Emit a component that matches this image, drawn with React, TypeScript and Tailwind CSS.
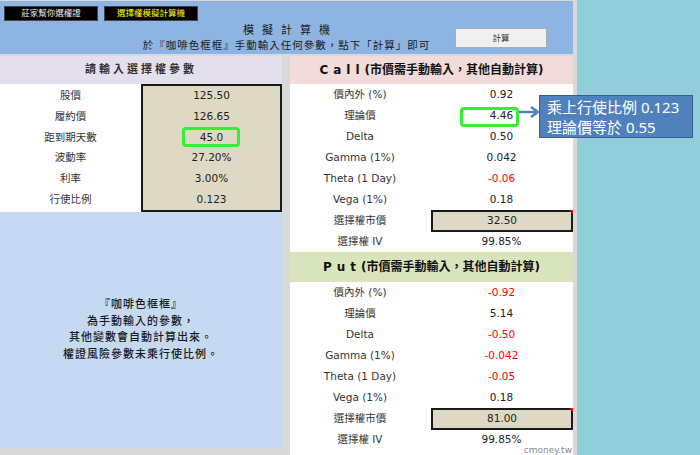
const FONT = '"DejaVu Sans", "Noto Sans CJK TC", sans-serif';

type Row = { label: string; value: string; red?: boolean; box?: boolean; mark?: boolean };

const inputs = [
  { label: "股價", value: "125.50" },
  { label: "履約價", value: "126.65" },
  { label: "距到期天數", value: "45.0", mark: true },
  { label: "波動率", value: "27.20%" },
  { label: "利率", value: "3.00%" },
  { label: "行使比例", value: "0.123" },
];

const callRows: Row[] = [
  { label: "價內外 (%)", value: "0.92" },
  { label: "理論價", value: "4.46", mark: true },
  { label: "Delta", value: "0.50" },
  { label: "Gamma (1%)", value: "0.042" },
  { label: "Theta (1 Day)", value: "-0.06", red: true },
  { label: "Vega (1%)", value: "0.18" },
  { label: "選擇權市價", value: "32.50", box: true },
  { label: "選擇權 IV", value: "99.85%" },
];

const putRows: Row[] = [
  { label: "價內外 (%)", value: "-0.92", red: true },
  { label: "理論價", value: "5.14" },
  { label: "Delta", value: "-0.50", red: true },
  { label: "Gamma (1%)", value: "-0.042", red: true },
  { label: "Theta (1 Day)", value: "-0.05", red: true },
  { label: "Vega (1%)", value: "0.18" },
  { label: "選擇權市價", value: "81.00", box: true },
  { label: "選擇權 IV", value: "99.85%" },
];

function OutRow({ r }: { r: Row }) {
  return (
    <div className="flex h-[21px] items-center text-[10.5px]">
      <div className="w-[140px] text-center text-[#333]">{r.label}</div>
      <div className="relative flex-1 h-full flex items-center justify-center">
        {r.box ? (
          <div className="relative ml-px w-full h-[22px] border-2 border-[#1a1a1a] bg-[#ddd9c4] flex items-center justify-center text-[#222]">
            {r.value}
            {/* comment marker */}
            <span className="absolute -top-[2px] -right-[2px] w-0 h-0 border-l-[4px] border-l-transparent border-t-[4px] border-t-[#ff0000]" />
          </div>
        ) : (
          <span className={r.red ? "text-[#ff0000]" : "text-[#222]"}>{r.value}</span>
        )}
        {r.mark && (
          <div className="absolute left-[30px] top-[2px] w-[59px] h-[20px] rounded-[4px] border-[3px] border-[#33f033]" />
        )}
      </div>
    </div>
  );
}

export default function App() {
  return (
    <div
      className="relative w-[700px] h-[455px] flex bg-[#92cddc] overflow-hidden"
      style={{ fontFamily: FONT }}
    >
      <div className="w-[577px] h-full bg-[#d9d9d9] pt-px pr-[4px] flex flex-col">
        {/* header */}
        <div className="h-[53px] bg-[#8db4e2] pt-[5px]">
          <div className="flex gap-[6px] pl-[4px]">
            <div className="w-[94px] h-[15px] bg-black border border-[#444] flex items-center justify-center text-[8.5px] text-[#e8e8e8]">
              莊家幫你選權證
            </div>
            <div className="w-[94px] h-[15px] bg-black border border-[#444] flex items-center justify-center text-[8.5px] text-[#ffff00]">
              選擇權模擬計算機
            </div>
          </div>
          <div className="mt-[3px] grid grid-cols-[1fr_auto_1fr] items-center">
            <div />
            <div className="flex flex-col items-center text-[#1a1a1a]">
              <div className="text-[11px] leading-[14px] tracking-[8px] ml-[8px]">模擬計算機</div>
              <div className="text-[10.5px] leading-[14px] tracking-[1px]">
                於『咖啡色框框』手動輸入任何參數，點下「計算」即可
              </div>
            </div>
            <div className="flex justify-end pr-[26px]">
              <div className="w-[92px] h-[20px] bg-[#f0f0f0] border border-[#adadad] flex items-center justify-center text-[8.5px] text-[#333]">
                計算
              </div>
            </div>
          </div>
        </div>

        <div className="mt-[2px] flex gap-[8px] flex-1">
          {/* left column */}
          <div className="w-[282px] flex flex-col">
            <div className="h-[28px] bg-[#e4dfec] flex items-center justify-center text-[11px] font-semibold tracking-[3px] text-[#333]">
              請輸入選擇權參數
            </div>
            <div className="h-[128px] flex bg-white text-[10.5px]">
              <div className="w-[141px] flex flex-col py-[2px]">
                {inputs.map((r) => (
                  <div key={r.label} className="flex-1 flex items-center justify-center text-[#333]">
                    {r.label}
                  </div>
                ))}
              </div>
              <div className="w-[141px] border-2 border-[#1a1a1a] bg-[#ddd9c4] flex flex-col">
                {inputs.map((r) => (
                  <div key={r.label} className="relative flex-1 flex items-center justify-center text-[#222]">
                    {r.value}
                    {r.mark && (
                      <div className="absolute left-[39px] top-0 w-[58px] h-[20px] rounded-[4px] border-[3px] border-[#33f033]" />
                    )}
                  </div>
                ))}
              </div>
            </div>
            <div className="h-[236px] bg-[#c5d9f1] flex flex-col items-center justify-center text-[11px] font-medium leading-[16.5px] tracking-[1px] text-[#1a1a1a]">
              <div>『咖啡色框框』</div>
              <div>為手動輸入的參數，</div>
              <div>其他變數會自動計算出來。</div>
              <div>權證風險參數未乘行使比例。</div>
            </div>
          </div>

          {/* right column */}
          <div className="relative w-[283px] bg-white flex flex-col">
            <div className="h-[28px] bg-[#f2dcdb] flex items-center justify-center text-[12px] font-bold text-[#111]">
              <span className="tracking-[5px]">Call</span>
              <span>(市價需手動輸入，其他自動計算)</span>
            </div>
            {callRows.map((r) => (
              <OutRow key={"c" + r.label} r={r} />
            ))}
            <div className="h-[30px] bg-[#d8e4bc] flex items-center justify-center text-[12px] font-bold text-[#111]">
              <span className="tracking-[5px]">Put</span>
              <span>(市價需手動輸入，其他自動計算)</span>
            </div>
            {putRows.map((r) => (
              <OutRow key={"p" + r.label} r={r} />
            ))}
            <span className="absolute right-[1px] bottom-0 text-[9px] leading-[10px] text-[#8a8a8a] [text-shadow:0_0_2px_#fff]">
              cmoney.tw
            </span>
          </div>
        </div>
      </div>

      {/* callout */}
      <svg className="absolute left-[518px] top-[105px]" width="22" height="14" viewBox="0 0 22 14">
        <line x1="1" y1="7" x2="20" y2="7" stroke="#4f81bd" strokeWidth="2.5" />
        <polyline points="13,2 20,7 13,12" fill="none" stroke="#4f81bd" strokeWidth="2.5" />
      </svg>
      <div
        className="absolute left-[539px] top-[95px] w-[154px] h-[43px] bg-[#4f81bd] border border-[#385d8a] pl-[7px] flex flex-col justify-center text-[15px] leading-[20px] text-white"
        style={{ fontFamily: '"Noto Sans", "Noto Sans CJK TC", sans-serif' }}
      >
        <div>乘上行使比例 0.123</div>
        <div>理論價等於 0.55</div>
      </div>
    </div>
  );
}
